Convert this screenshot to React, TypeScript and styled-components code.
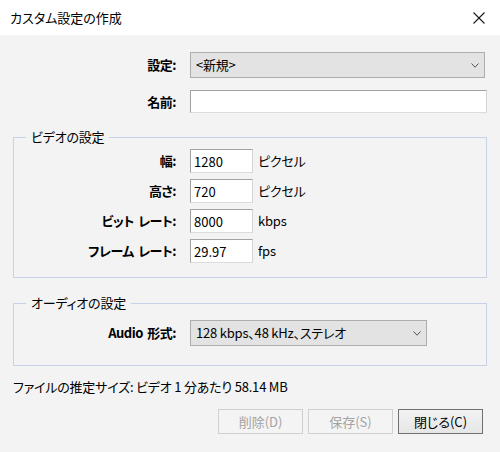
import styled, { createGlobalStyle } from 'styled-components';

const GlobalStyle = createGlobalStyle`
    body {
        margin: 0;
        background: #f3f3f3;
        font-family: "Noto Sans CJK JP", "Noto Sans", sans-serif;
        font-size: 13px;
        line-height: 16px;
        letter-spacing: -0.2px;
        color: #000;
        font-feature-settings: "palt";
    }
`;

const Dialog = styled.div`
    width: 500px;
    height: 452px;
    display: flex;
    flex-direction: column;
    background: #f3f3f3;
    overflow: hidden;
`;

const TitleBar = styled.div`
    flex-shrink: 0;
    height: 35px;
    display: flex;
    align-items: center;
    justify-content: space-between;
    padding: 0 15px 0 10px;
    background: #fff;
`;

const Title = styled.div`
    font-size: 13px;
    letter-spacing: 0;
`;

const CloseIcon = styled.svg`
    width: 12px;
    height: 12px;
    stroke: #1a1a1a;
    stroke-width: 1.1;
`;

const Body = styled.div`
    display: flex;
    flex-direction: column;
    padding: 17px 13px 0 13px;
`;

const Form = styled.div`
    display: flex;
    flex-direction: column;
    gap: 12px;
`;

const Row = styled.div`
    display: flex;
    align-items: center;
`;

const Label = styled.label`
    flex-shrink: 0;
    width: 163px;
    margin-right: 14px;
    text-align: right;
    font-weight: 700;
    letter-spacing: -0.5px;
    word-spacing: 2px;
`;

const Select = styled.div<{ $width: number }>`
    box-sizing: border-box;
    width: ${({ $width }) => $width}px;
    height: 26px;
    display: flex;
    align-items: center;
    justify-content: space-between;
    padding: 0 5px 0 5px;
    background: #e3e3e3;
    border: 1px solid #adadad;
`;

const Chevron = styled.svg`
    width: 8px;
    height: 5px;
    fill: none;
    stroke: #555;
    stroke-width: 1;
`;

const TextInput = styled.input<{ $width: number }>`
    box-sizing: border-box;
    width: ${({ $width }) => $width}px;
    height: ${({ $width }) => ($width > 100 ? 23 : 24)}px;
    padding: 0 3px;
    margin: 0;
    font: inherit;
    color: #000;
    background: #fff;
    border: 1px solid;
    border-color: #a2a2a2 #d5d5d5 #dcdcdc #a2a2a2;
    outline: none;
`;

const Unit = styled.span`
    margin-left: 5px;
`;

const Group = styled.fieldset<{ $top: number; $bottom: number; $gap: number }>`
    display: flex;
    flex-direction: column;
    gap: ${({ $gap }) => $gap}px;
    margin: ${({ $top }) => $top}px 0 0 0;
    padding: 0 0 ${({ $bottom }) => $bottom}px 0;
    min-width: 0;
    border: 1px solid #c7d2e8;

    ${Label} {
        width: 162px;
    }
`;

const Legend = styled.legend<{ $after: number }>`
    margin-left: 12px;
    margin-bottom: ${({ $after }) => $after}px;
    padding: 0 5px;
    line-height: 16px;
`;

const Estimate = styled.div`
    margin-top: 13px;
`;

const ButtonBar = styled.div`
    display: flex;
    justify-content: flex-end;
    gap: 5px;
    margin-top: 14px;
    padding-right: 4px;
`;

const Button = styled.button`
    box-sizing: border-box;
    width: 85px;
    height: 25px;
    padding: 0;
    font: inherit;
    color: #000;
    background: linear-gradient(#f2f2f2, #e6e6e6);
    border: 1px solid #707070;

    &:disabled {
        color: #a3a3a3;
        background: #f4f4f4;
        border-color: #cfcfcf;
    }
`;

const ChevronDown = () => (
    <Chevron viewBox="0 0 8 5">
        <polyline points="0.5,0.5 4,4.2 7.5,0.5" />
    </Chevron>
);

const videoRows = [
    { label: '幅:', value: '1280', unit: 'ピクセル' },
    { label: '高さ:', value: '720', unit: 'ピクセル' },
    { label: 'ビット レート:', value: '8000', unit: 'kbps' },
    { label: 'フレーム レート:', value: '29.97', unit: 'fps' },
];

export default function App() {
    return (
        <Dialog>
            <GlobalStyle />
            <TitleBar>
                <Title>カスタム設定の作成</Title>
                <CloseIcon viewBox="0 0 12 12">
                    <line x1="0.5" y1="0.5" x2="11.5" y2="11.5" />
                    <line x1="11.5" y1="0.5" x2="0.5" y2="11.5" />
                </CloseIcon>
            </TitleBar>
            <Body>
                <Form>
                    <Row>
                        <Label>設定:</Label>
                        <Select $width={295}>
                            <span>&lt;新規&gt;</span>
                            <ChevronDown />
                        </Select>
                    </Row>
                    <Row>
                        <Label>名前:</Label>
                        <TextInput $width={297} defaultValue="" />
                    </Row>
                </Form>
                <Group $top={16} $bottom={14} $gap={6}>
                    <Legend $after={4}>ビデオの設定</Legend>
                    {videoRows.map((r) => (
                        <Row key={r.label}>
                            <Label>{r.label}</Label>
                            <TextInput $width={63} defaultValue={r.value} />
                            <Unit>{r.unit}</Unit>
                        </Row>
                    ))}
                </Group>
                <Group $top={17} $bottom={19} $gap={0}>
                    <Legend $after={9}>オーディオの設定</Legend>
                    <Row>
                        <Label>Audio 形式:</Label>
                        <Select $width={237}>
                            <span>128 kbps、48 kHz、ステレオ</span>
                            <ChevronDown />
                        </Select>
                    </Row>
                </Group>
                <Estimate>ファイルの推定サイズ: ビデオ 1 分あたり 58.14 MB</Estimate>
                <ButtonBar>
                    <Button disabled>削除(D)</Button>
                    <Button disabled>保存(S)</Button>
                    <Button>閉じる(C)</Button>
                </ButtonBar>
            </Body>
        </Dialog>
    );
}
